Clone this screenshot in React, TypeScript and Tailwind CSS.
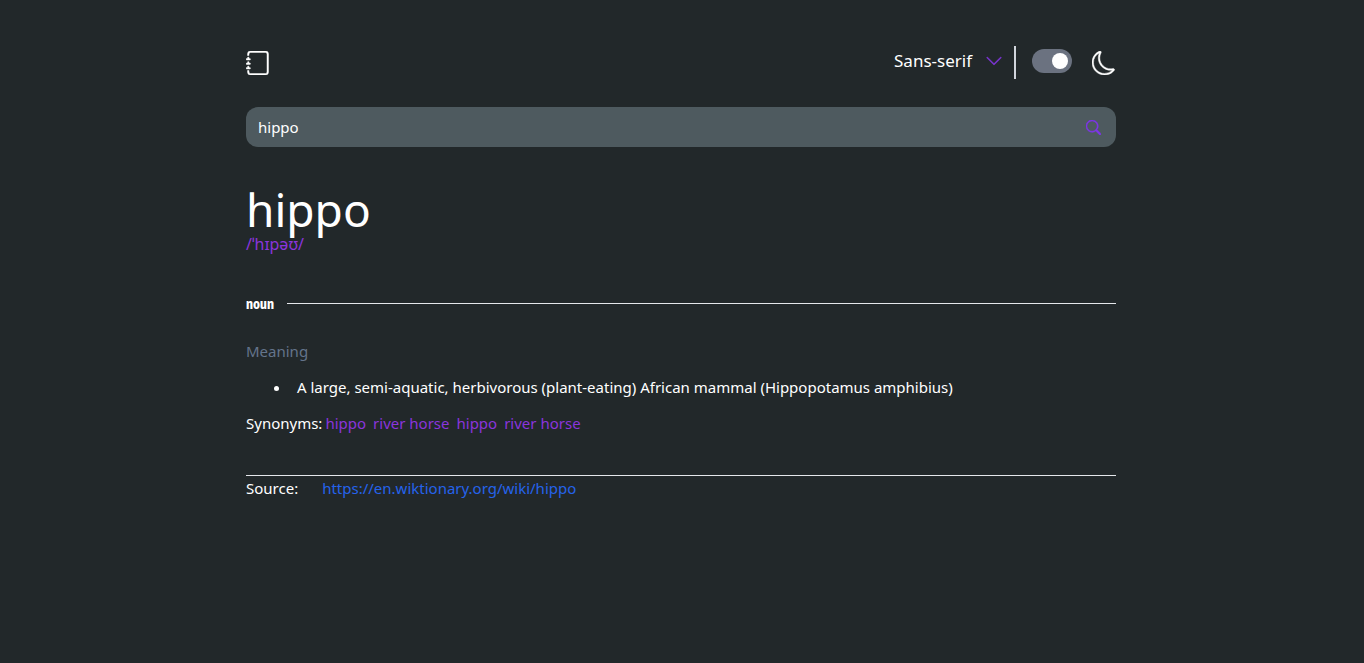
import { useState } from 'react';
import { BsChevronDown, BsJournal, BsMoon, BsSearch } from 'react-icons/bs';

const synonyms = ['hippo', 'river horse', 'hippo', 'river horse'];

function Header() {
  const [dark, setDark] = useState(true);
  return (
    <header className="flex items-start justify-between">
      <BsJournal className="mt-[5px] size-6" strokeWidth={0.3} aria-label="Dictionary" />
      <div className="flex items-start">
        <button type="button" className="mt-[3px] flex items-center gap-[13px] pr-[11px] text-[17px] leading-6">
          Sans-serif
          <BsChevronDown className="size-[18px] text-[#7e35d6]" strokeWidth={0.4} />
        </button>
        <span className="h-[33px] w-0.5 bg-gray-300" />
        <label className="relative mt-[3px] ml-4 flex h-6 w-10 cursor-pointer">
          <input
            type="checkbox"
            aria-label="Dark mode"
            checked={dark}
            onChange={(e) => setDark(e.target.checked)}
            className="peer h-6 w-10 appearance-none rounded-full bg-[#6b7280]"
          />
          <span className="pointer-events-none absolute top-1 left-1 size-4 rounded-full bg-white peer-checked:left-5" />
        </label>
        <BsMoon className="mt-[5px] ml-5 size-6" strokeWidth={0.3} />
      </div>
    </header>
  );
}

export default function App() {
  return (
    <div className="min-h-screen bg-[#22282a] pr-[18px] pl-4 font-['Noto_Sans','Open_Sans',sans-serif] text-[15px] leading-6 text-white">
      <main className="mx-auto max-w-[870px] pt-[46px]">
        <Header />
        <form className="mt-7 flex h-10 items-center rounded-xl bg-[#4e5a5f] pr-[15px] pl-3" onSubmit={(e) => e.preventDefault()}>
          <input type="text" aria-label="Search word" defaultValue="hippo" className="min-w-0 flex-1 bg-transparent outline-none" />
          <button type="submit" aria-label="Search">
            <BsSearch className="size-[15px] text-[#7f35ea]" strokeWidth={0.6} />
          </button>
        </form>

        <section className="mt-[39px]">
          <h1 className="text-[46px] leading-[46px]">hippo</h1>
          <p className="text-[16px] text-[#8a35dc]">/ˈhɪpəʊ/</p>
        </section>

        <section className="mt-[35px]">
          <div className="flex items-center gap-[13px]">
            <h2 className="font-['Noto_Sans_Mono_CJK_JP','DejaVu_Sans_Mono',monospace] text-[14px] font-bold">noun</h2>
            <span className="h-px flex-1 bg-gray-200" />
          </div>
          <h3 className="mt-6 text-[#64748b]">Meaning</h3>
          <ul className="my-3 list-disc pl-[45px]">
            <li className="pl-[6px]">A large, semi-aquatic, herbivorous (plant-eating) African mammal (Hippopotamus amphibius)</li>
          </ul>
          <div className="flex">
            Synonyms:
            <ul className="flex gap-[7px] pl-[3px] text-[#8a35dc]">
              {synonyms.map((word, i) => (
                <li key={i}>{word}</li>
              ))}
            </ul>
          </div>
        </section>

        <footer className="mt-10 flex gap-6 border-t border-gray-200">
          <span>Source:</span>
          <a href="https://en.wiktionary.org/wiki/hippo" className="text-[#2563eb]">
            https://en.wiktionary.org/wiki/hippo
          </a>
        </footer>
      </main>
    </div>
  );
}
